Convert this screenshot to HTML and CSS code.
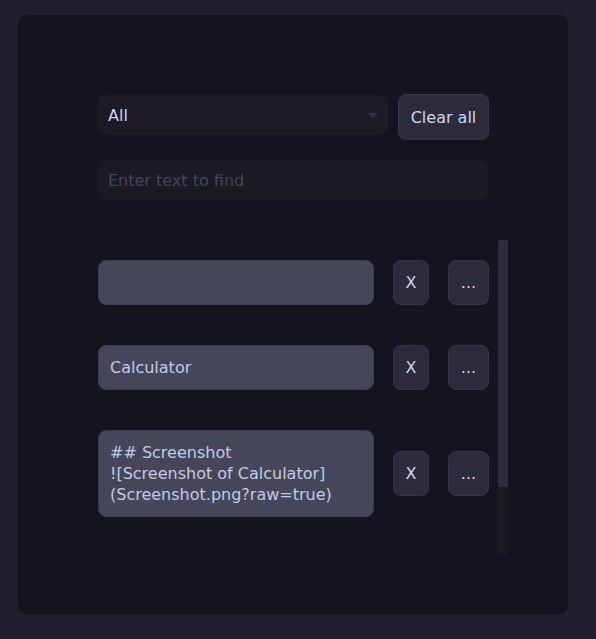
FILE: index.html
```html
<!DOCTYPE html>
<html>
<head>
<meta charset="utf-8">
<link rel="stylesheet" href="styles.css">
</head>
<body>
<div class="panel">
  <div class="toolbar">
    <div class="select"><span>All</span><span class="caret"></span></div>
    <button class="btn clear">Clear all</button>
  </div>
  <div class="search">Enter text to find</div>
  <div class="scrollwrap">
    <div class="list">
      <div class="row">
        <div class="box"></div>
        <button class="btn small x">X</button>
        <button class="btn small more">...</button>
      </div>
      <div class="row">
        <div class="box">Calculator</div>
        <button class="btn small x">X</button>
        <button class="btn small more">...</button>
      </div>
      <div class="row">
        <div class="box">## Screenshot<br>![Screenshot of Calculator]<br>(Screenshot.png?raw=true)</div>
        <button class="btn small x">X</button>
        <button class="btn small more">...</button>
      </div>
    </div>
    <div class="track"><div class="thumb"></div></div>
  </div>
</div>
</body>
</html>
```
FILE: styles.css
```css
html, body {
  margin: 0;
  padding: 0;
  background: #1f1f2d;
  font-family: "DejaVu Sans", sans-serif;
  font-size: 16px;
  color: #cdd6f4;
}
body {
  padding: 15px 0 0 18px;
}
.panel {
  width: 550px;
  height: 599px;
  box-sizing: border-box;
  background: #141420;
  border-radius: 9px;
  padding: 79px 60px 0 80px;
}
.toolbar {
  display: flex;
  align-items: flex-start;
  gap: 10px;
  width: 391px;
}
.select {
  margin-top: 1px;
  width: 290px;
  height: 40px;
  box-sizing: border-box;
  background: #1b1b26;
  border-radius: 8px;
  display: flex;
  align-items: center;
  justify-content: space-between;
  padding: 0 10px;
  color: #cdd6f4;
}
.caret {
  width: 0;
  height: 0;
  border-left: 5px solid transparent;
  border-right: 5px solid transparent;
  border-top: 5px solid #34344a;
}
.btn {
  font-family: "DejaVu Sans", sans-serif;
  font-size: 16px;
  color: #cdd6f4;
  background: #2b2b3b;
  border: 1px solid #363647;
  border-radius: 8px;
  padding: 0;
  margin: 0;
  box-sizing: border-box;
}
.clear {
  width: 91px;
  height: 46px;
}
.search {
  margin-top: 20px;
  width: 390px;
  height: 40px;
  box-sizing: border-box;
  background: #1a1a24;
  border-radius: 8px;
  padding: 0 10px;
  display: flex;
  align-items: center;
  color: #45465a;
}
.scrollwrap {
  margin-top: 40px;
  display: flex;
  gap: 9px;
  height: 315px;
}
.list {
  width: 391px;
  height: 315px;
  overflow: hidden;
  box-sizing: border-box;
  padding-top: 20px;
  display: flex;
  flex-direction: column;
  gap: 40px;
}
.track {
  width: 10px;
  height: 315px;
  background: #191921;
}
.thumb {
  height: 247px;
  background: #2e2e3e;
  border-radius: 1px;
}
.row {
  display: flex;
  align-items: center;
  gap: 19px;
  width: 391px;
  flex-shrink: 0;
}
.box {
  flex: 1;
  min-height: 45px;
  box-sizing: border-box;
  background: #454759;
  border: 1px solid #3a3b4d;
  border-radius: 8px;
  padding: 11px 11px;
  line-height: 21px;
  color: #c4cae6;
}
.small {
  height: 45px;
  flex-shrink: 0;
}
.x {
  width: 36px;
}
.more {
  width: 41px;
}
```
